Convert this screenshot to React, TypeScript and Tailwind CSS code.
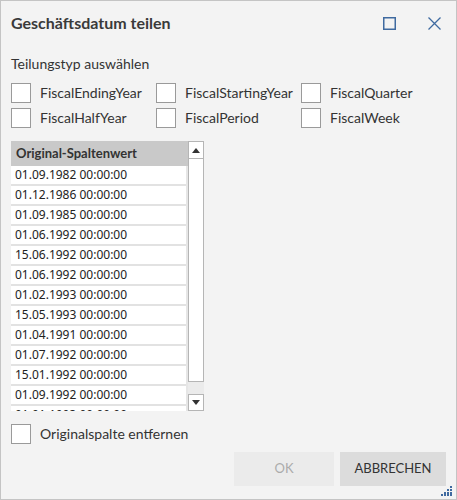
import { useState } from "react";

const options = [
  "FiscalEndingYear",
  "FiscalStartingYear",
  "FiscalQuarter",
  "FiscalHalfYear",
  "FiscalPeriod",
  "FiscalWeek",
];

const values = [
  "01.09.1982 00:00:00",
  "01.12.1986 00:00:00",
  "01.09.1985 00:00:00",
  "01.06.1992 00:00:00",
  "15.06.1992 00:00:00",
  "01.06.1992 00:00:00",
  "01.02.1993 00:00:00",
  "15.05.1993 00:00:00",
  "01.04.1991 00:00:00",
  "01.07.1992 00:00:00",
  "15.01.1992 00:00:00",
  "01.09.1992 00:00:00",
  "01.01.1993 00:00:00",
];

const CheckBox = ({ label }: { label: string }) => {
  const [on, setOn] = useState(false);
  return (
    <label className="flex items-center gap-[9px] cursor-pointer" onClick={() => setOn(!on)}>
      <span className="w-5 h-5 bg-white border border-[#9a9a9a] shrink-0 flex items-center justify-center text-[12px]">
        {on ? "✓" : ""}
      </span>
      <span className="text-[14px] text-[#333] leading-5 whitespace-nowrap">{label}</span>
    </label>
  );
};

export default function App() {
  return (
    <div
      className="w-[457px] h-[500px] bg-[#f3f3f3] border border-[#c4c4c4] relative flex flex-col"
      style={{ fontFamily: 'Lato, "Noto Sans", sans-serif' }}
    >
      <div className="flex items-center h-[44px] pl-[10px] pr-[15px]">
        <h1 className="text-[16px] font-bold text-[#3a3a3a] flex-1">Geschäftsdatum teilen</h1>
        <svg width="13" height="13" viewBox="0 0 13 13" className="mr-[32px]">
          <rect x="0.75" y="0.75" width="11.5" height="11.5" fill="none" stroke="#3f6aa0" strokeWidth="1.5" />
        </svg>
        <svg width="13" height="13" viewBox="0 0 13 13">
          <path d="M0.5 0.5 L12.5 12.5 M12.5 0.5 L0.5 12.5" stroke="#3f6aa0" strokeWidth="1.3" />
        </svg>
      </div>

      <div className="px-[10px] pt-[9px]">
        <div className="text-[14px] text-[#333] leading-5">Teilungstyp auswählen</div>
        <div className="grid grid-cols-[145px_145px_145px] gap-y-[5px] mt-[9px]">
          {options.map((o) => (
            <CheckBox key={o} label={o} />
          ))}
        </div>

        {/* value list with its scrollbar */}
        <div className="flex mt-[13px] w-[193px] h-[270px] bg-[#e6e6e6]">
          <div className="flex-1 flex flex-col overflow-hidden">
            <div className="h-[25px] bg-[#c9c9c9] text-[13px] font-bold text-[#333] flex items-center pl-[5px] pr-[2px] shrink-0">
              Original-Spaltenwert
            </div>
            <div className="overflow-hidden flex-1 mr-[2px]">
              {values.map((v, i) => (
                <div
                  key={i}
                  className="h-5 bg-white border-b-2 border-[#e2e2e2] text-[12px] text-[#222] leading-[18px] pl-[4px] whitespace-nowrap"
                  style={{ fontFamily: '"Noto Sans", sans-serif' }}
                >
                  {v}
                </div>
              ))}
            </div>
          </div>
          <div className="w-4 flex flex-col bg-[#ebebeb]">
            <div className="h-[18px] bg-white border border-[#b5b5b5] flex items-center justify-center">
              <svg width="8" height="5" viewBox="0 0 8 5">
                <path d="M0 5 L4 0 L8 5 Z" fill="#333" />
              </svg>
            </div>
            <div className="h-[223px] bg-white border border-[#b5b5b5] border-t-0"></div>
            <div className="flex-1"></div>
            <div className="h-[17px] bg-white border border-[#b5b5b5] flex items-center justify-center">
              <svg width="8" height="5" viewBox="0 0 8 5">
                <path d="M0 0 L4 5 L8 0 Z" fill="#333" />
              </svg>
            </div>
          </div>
        </div>

        <div className="mt-[13px]">
          <CheckBox label="Originalspalte entfernen" />
        </div>
      </div>

      <div className="flex justify-end gap-[6px] pr-[10px] mt-[8px]">
        <button className="w-[100px] h-[34px] bg-[#ebebeb] text-[13px] text-[#ababab]">OK</button>
        <button className="w-[106px] h-[34px] bg-[#dcdcdc] text-[13px] text-[#333]">ABBRECHEN</button>
      </div>

      <svg width="12" height="10" viewBox="0 0 12 10" className="absolute right-[3px] bottom-[3px]">
        {[
          [9, 0],
          [6, 3], [9, 3],
          [3, 6], [6, 6], [9, 6],
          [0, 8], [3, 8], [6, 8], [9, 8],
        ].map(([x, y], i) => (
          <rect key={i} x={x} y={y} width="2" height="2" fill="#3f6aa0" />
        ))}
      </svg>
    </div>
  );
}
